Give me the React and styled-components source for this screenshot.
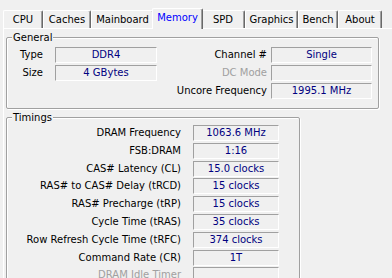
import React from 'react';
import styled, { createGlobalStyle } from 'styled-components';

const Global = createGlobalStyle`
  html, body { margin: 0; padding: 0; background: #f0f0f0; }
  body {
    font-family: "DejaVu Sans", Verdana, sans-serif;
    font-size: 10px;
    color: #000;
  }
`;

const Window = styled.div`
  width: 392px;
  height: 278px;
  overflow: hidden;
  background: #f0f0f0;
  padding-top: 8px;
  box-sizing: border-box;
`;

const TabStrip = styled.div`
  display: flex;
  align-items: flex-end;
  height: 20px;
  padding-left: 3px;
  position: relative;
  z-index: 1;
`;

const Tab = styled.div`
  box-sizing: border-box;
  flex: none;
  width: ${(p) => p.$w}px;
  height: ${(p) => (p.$active ? 21 : 18)}px;
  margin: 0 ${(p) => (p.$active ? -2 : 0)}px ${(p) => (p.$active ? -1 : 0)}px;
  padding-bottom: ${(p) => (p.$active ? 3 : 0)}px;
  border-top: 1px solid #fff;
  border-left: 1px solid #fff;
  border-right: 1px solid #696969;
  box-shadow: inset -1px 0 0 #a0a0a0;
  border-radius: 2px 2px 0 0;
  background: #f0f0f0;
  color: ${(p) => (p.$active ? '#0000ff' : '#000')};
  display: flex;
  align-items: center;
  justify-content: center;
  white-space: nowrap;
  position: relative;
  z-index: ${(p) => (p.$active ? 2 : 1)};
`;

const Panel = styled.div`
  margin-left: 3px;
  width: 420px;
  height: 262px;
  border-top: 1px solid #fff;
  border-left: 1px solid #fff;
  padding: 1px 0 0 2px;
  box-sizing: border-box;
`;

const Group = styled.fieldset`
  margin: ${(p) => p.$top}px 0 0 0;
  padding: 0;
  min-width: 0;
  width: ${(p) => p.$w}px;
  box-sizing: border-box;
  border: 1px solid #a0a0a0;
  border-radius: 2px;
  box-shadow: 1px 1px 0 #fff, inset 1px 1px 0 #fff;
`;

const Legend = styled.legend`
  margin-left: 5px;
  padding: 0 1px;
  line-height: 13px;
  background: #f0f0f0;
`;

const GeneralBody = styled.div`
  display: flex;
  padding: 3px 6px 9px 0;
`;

const PairGrid = styled.div`
  display: grid;
  grid-template-columns: ${(p) => p.$cols};
  grid-auto-rows: 16px;
  column-gap: ${(p) => p.$gap}px;
  row-gap: ${(p) => p.$rowGap}px;
  margin-left: ${(p) => (p.$right ? 'auto' : '0')};
  padding-right: ${(p) => p.$padRight || 0}px;
`;

const TimingsBody = styled.div`
  padding: 1px 0 0 0;
  height: 160px;
`;

const Label = styled.div`
  text-align: right;
  line-height: 16px;
  white-space: nowrap;
  color: ${(p) => (p.$disabled ? '#a0a0a0' : '#000')};
`;

const Field = styled.div`
  box-sizing: border-box;
  height: 16px;
  border-top: 1px solid #a0a0a0;
  border-left: 1px solid #a0a0a0;
  border-right: 1px solid #fff;
  border-bottom: 1px solid #fff;
  color: #000080;
  text-align: center;
  line-height: 14px;
  white-space: nowrap;
  overflow: hidden;
`;

const tabs = [
  ['CPU', 40],
  ['Caches', 48],
  ['Mainboard', 63],
  ['Memory', 51, true],
  ['SPD', 44],
  ['Graphics', 53],
  ['Bench', 40],
  ['About', 44],
];

const timings = [
  ['DRAM Frequency', '1063.6 MHz'],
  ['FSB:DRAM', '1:16'],
  ['CAS# Latency (CL)', '15.0 clocks'],
  ['RAS# to CAS# Delay (tRCD)', '15 clocks'],
  ['RAS# Precharge (tRP)', '15 clocks'],
  ['Cycle Time (tRAS)', '35 clocks'],
  ['Row Refresh Cycle Time (tRFC)', '374 clocks'],
  ['Command Rate (CR)', '1T'],
  ['DRAM Idle Timer', '', true],
];

export default function App() {
  return (
    <>
      <Global />
      <Window>
        <TabStrip>
          {tabs.map(([name, w, active]) => (
            <Tab key={name} $w={w} $active={active}>
              {name}
            </Tab>
          ))}
        </TabStrip>
        <Panel>
          <Group $w={373} $top={1}>
            <Legend>General</Legend>
            <GeneralBody>
              <PairGrid $cols="36px 102px" $gap={12} $rowGap={2}>
                <Label>Type</Label>
                <Field>DDR4</Field>
                <Label>Size</Label>
                <Field>4 GBytes</Field>
              </PairGrid>
              <PairGrid $cols="auto 101px" $gap={4} $rowGap={2} $right>
                <Label>Channel #</Label>
                <Field>Single</Field>
                <Label $disabled>DC Mode</Label>
                <Field />
                <Label>Uncore Frequency</Label>
                <Field>1995.1 MHz</Field>
              </PairGrid>
            </GeneralBody>
          </Group>
          <Group $w={294} $top={2}>
            <Legend>Timings</Legend>
            <TimingsBody>
              <PairGrid $cols="1fr 86px" $gap={12} $rowGap={1.8} $padRight={20}>
                {timings.map(([label, value, disabled]) => (
                  <React.Fragment key={label}>
                    <Label $disabled={disabled}>{label}</Label>
                    <Field>{value}</Field>
                  </React.Fragment>
                ))}
              </PairGrid>
            </TimingsBody>
          </Group>
        </Panel>
      </Window>
    </>
  );
}
